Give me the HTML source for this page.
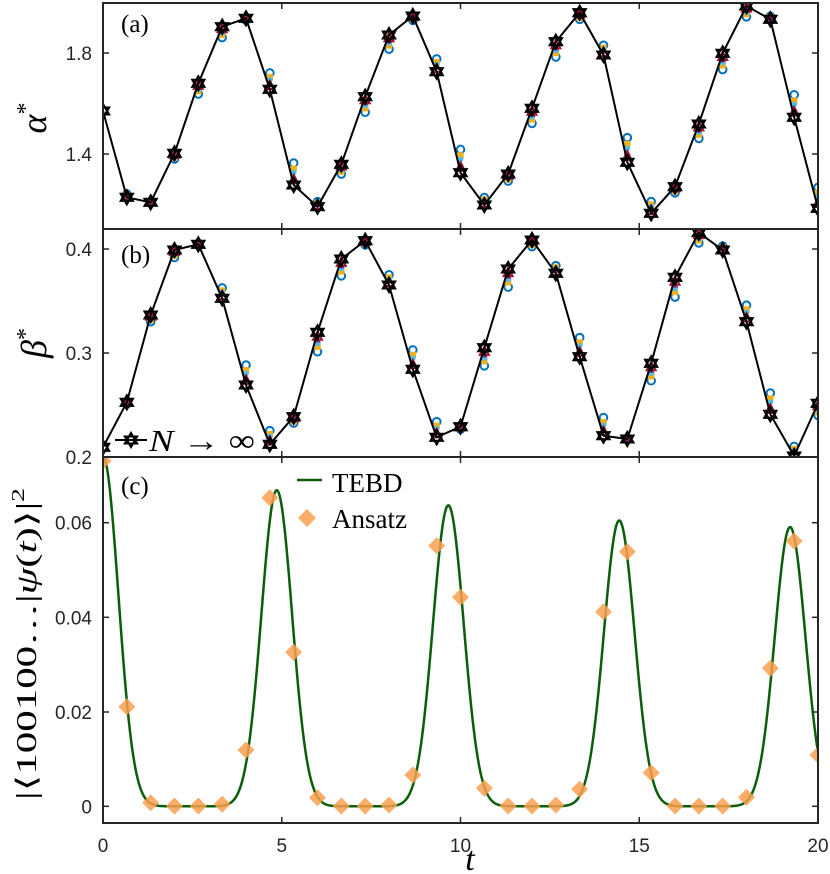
<!DOCTYPE html>
<html><head><meta charset="utf-8">
<style>
html,body{margin:0;padding:0;background:#fff;}
svg{display:block;}
.tl{font-family:"Liberation Sans",Arial,sans-serif;font-size:19px;fill:#262626;}
.sf{font-family:"Liberation Serif","DejaVu Serif",serif;fill:#000;}
</style></head>
<body>
<svg id="s" width="830" height="874" viewBox="0 0 830 874" xmlns="http://www.w3.org/2000/svg">
<defs>
<clipPath id="ca"><rect x="103" y="3" width="715" height="226"/></clipPath>
<clipPath id="cb"><rect x="103" y="229" width="715" height="228"/></clipPath>
<clipPath id="cc"><rect x="103" y="457" width="715" height="366"/></clipPath>
</defs>
<g id="plots"></g>
<g fill="none" stroke="#262626" stroke-width="2">
<rect x="103" y="3" width="715" height="226"/>
<rect x="103" y="229" width="715" height="228"/>
<rect x="103" y="457" width="715" height="366"/>
</g>
<g id="ticks" stroke="#262626" stroke-width="1.5"></g>
<g class="tl" text-anchor="end">
<text x="92" y="60">1.8</text>
<text x="92" y="161">1.4</text>
<text x="92" y="256">0.4</text>
<text x="92" y="360">0.3</text>
<text x="92" y="464">0.2</text>
<text x="92" y="529.7">0.06</text>
<text x="92" y="624.3">0.04</text>
<text x="92" y="719">0.02</text>
<text x="92" y="813.3">0</text>
</g>
<g class="tl" text-anchor="middle">
<text x="103" y="852">0</text>
<text x="281.75" y="852">5</text>
<text x="460.5" y="852">10</text>
<text x="639.25" y="852">15</text>
<text x="818" y="852">20</text>
</g>
<text class="sf" x="470" y="870" font-size="34" font-style="italic" text-anchor="middle">t</text>
<text class="sf" transform="translate(46,118) rotate(-90)" font-size="36" font-style="italic" text-anchor="middle">α<tspan font-size="24" font-style="normal" dy="-13">*</tspan></text>
<text class="sf" transform="translate(46,343) rotate(-90)" font-size="36" font-style="italic" text-anchor="middle">β<tspan font-size="24" font-style="normal" dy="-13">*</tspan></text>
<text class="sf" transform="translate(36,644) rotate(-90)" font-size="28" text-anchor="middle" textLength="312" lengthAdjust="spacingAndGlyphs">|⟨100100…|<tspan font-style="italic">ψ</tspan>(<tspan font-style="italic">t</tspan>)⟩|<tspan font-size="18" dy="-12">2</tspan></text>
<text class="sf" x="121" y="32" font-size="25">(a)</text>
<text class="sf" x="121" y="263" font-size="25">(b)</text>
<text class="sf" x="121" y="494" font-size="25">(c)</text>
<line x1="115" y1="440" x2="147" y2="440" stroke="#000" stroke-width="2"/>
<g id="legstar"></g>
<text class="sf" x="149" y="451" font-size="31" textLength="106" lengthAdjust="spacingAndGlyphs"><tspan font-style="italic">N</tspan> → ∞</text>
<line x1="297" y1="480" x2="322" y2="480" stroke="#0a5e0a" stroke-width="2.5"/>
<text class="sf" x="332" y="492" font-size="27">TEBD</text>
<path d="M307 509 L316 518 L307 527 L298 518 Z" fill="#f9a04f" fill-opacity="0.85"/>
<text class="sf" x="332" y="528" font-size="27">Ansatz</text>
</svg>
<script>
(function(){
var X0=103,X1=818;function px(t){return X0+(X1-X0)*t/20;}
var A=[111,197.3,202.3,153.3,83.3,26.7,18.3,89.3,185,206.7,164.3,96.7,35,16,71.7,172.7,205,174,108.3,41.7,12.7,55,162.3,213.3,186.7,124,53.3,6,19.3,117.3,208.3];
var B=[447.3,402.3,315,250,244.3,298.3,385,444.3,416.7,332.3,259,240.7,285,369.3,437.3,426.7,347.7,269,240,273.3,356.7,435.7,439,363.3,277.3,232.7,250,321.7,414.3,456,403.3];
var C=[461,706.7,802.7,806,806,804.3,750,497.7,652.3,797.7,806,806,805,775,545.7,597.3,788.3,806,806,805,789.3,611.7,551.7,772.7,806,806,806,797.3,668.3,541,755];
var h="";
function star(x,y,r){
 var p1=[],p2=[];
 for(var k=0;k<3;k++){var a=-Math.PI/2+k*2*Math.PI/3;p1.push((x+r*Math.cos(a)).toFixed(1)+","+(y+r*Math.sin(a)).toFixed(1));
 var b=Math.PI/2+k*2*Math.PI/3;p2.push((x+r*Math.cos(b)).toFixed(1)+","+(y+r*Math.sin(b)).toFixed(1));}
 return '<polygon points="'+p1.join(" ")+'" fill="none" stroke="#000" stroke-width="2.1"/><polygon points="'+p2.join(" ")+'" fill="none" stroke="#000" stroke-width="2.1"/>';
}
function panel(D,clip){
 var s='<g clip-path="url(#'+clip+')">';
 var fac=[0.05,0.09,0.13,0.17,0.23];
 for(var i=1;i<D.length;i++){
  var x=px(i*2/3);var sc=Math.min(1,i/6);
  for(var j=4;j>=0;j--){
   var y=D[i]+(D[i-1]-D[i])*fac[j]*sc;
   if(j==4)s+='<circle cx="'+x+'" cy="'+y+'" r="3.8" fill="none" stroke="#0072BD" stroke-width="2"/>';
   else if(j==3)s+='<rect x="'+(x-3.2)+'" y="'+(y-3.2)+'" width="6.4" height="6.4" fill="#EDB120"/>';
   else if(j==2)s+='<circle cx="'+x+'" cy="'+y+'" r="2.8" fill="#4DBEEE"/>';
   else if(j==1)s+='<path d="M'+x+' '+(y-3.8)+' L'+(x+3.4)+' '+(y+2.6)+' L'+(x-3.4)+' '+(y+2.6)+' Z" fill="#7E2F8E"/>';
   else s+='<path d="M'+x+' '+(y-5)+' L'+(x+4.5)+' '+(y+3.2)+' L'+(x-4.5)+' '+(y+3.2)+' Z" fill="none" stroke="#A2142F" stroke-width="2"/>';
  }
 }
 var pts=[];for(var i=0;i<D.length;i++)pts.push(px(i*2/3).toFixed(2)+","+D[i]);
 s+='<polyline points="'+pts.join(" ")+'" fill="none" stroke="#000" stroke-width="2"/>';
 for(var i=0;i<D.length;i++)s+=star(px(i*2/3),D[i],7);
 return s+'</g>';
}
h+=panel(A,"ca");h+=panel(B,"cb");
var peaks=[[0,0.074,0.43],[4.86,0.0669,0.43],[9.66,0.0637,0.43],[14.44,0.0605,0.43],[19.22,0.0591,0.43]];
var cp=[];
for(var t=0;t<=20.0001;t+=0.02){
 var v=0;peaks.forEach(function(p){var d=(t-p[0])/p[2];v+=p[1]*Math.exp(-0.5*d*d);});
 cp.push(px(t).toFixed(2)+","+(806.3-v*4725).toFixed(2));
}
h+='<g clip-path="url(#cc)"><polyline points="'+cp.join(" ")+'" fill="none" stroke="#0a5e0a" stroke-width="2.5"/>';
for(var i=0;i<C.length;i++){var x=px(i*2/3),y=C[i];
 h+='<path d="M'+x+' '+(y-8.5)+' L'+(x+8.5)+' '+y+' L'+x+' '+(y+8.5)+' L'+(x-8.5)+' '+y+' Z" fill="#f9a04f" fill-opacity="0.85"/>';}
h+='</g>';
document.getElementById("plots").innerHTML=h;
document.getElementById("legstar").innerHTML=star(131,440,7);
var tk="";var L=6;
[[3,229],[229,457],[457,823]].forEach(function(p){
 for(var k=0;k<=4;k++){var x=px(k*5);
  tk+='<line x1="'+x+'" y1="'+p[0]+'" x2="'+x+'" y2="'+(p[0]+L)+'"/>';
  tk+='<line x1="'+x+'" y1="'+p[1]+'" x2="'+x+'" y2="'+(p[1]-L)+'"/>';}
});
[53,154,249,353,522.7,617.3,712,806.3].forEach(function(y){
 tk+='<line x1="103" y1="'+y+'" x2="'+(103+L)+'" y2="'+y+'"/>';
 tk+='<line x1="818" y1="'+y+'" x2="'+(818-L)+'" y2="'+y+'"/>';
});
document.getElementById("ticks").innerHTML=tk;
})();
</script>
</body></html>
